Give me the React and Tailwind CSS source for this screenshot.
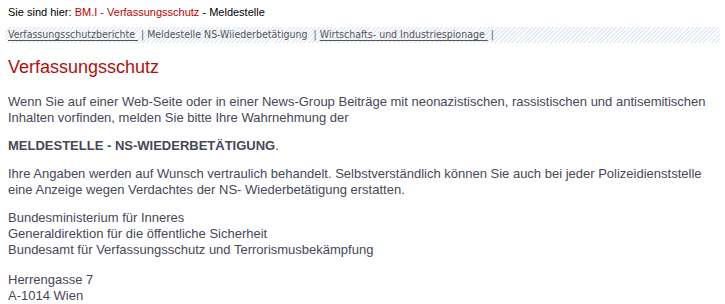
import React from 'react';

const NavLink = ({ children }) => (
  <a href="#" className="text-[#555] underline underline-offset-2 hover:text-[#b00]">
    {children}
  </a>
);

const App = () => {
  return (
    <div className="w-[725px] h-[304px] overflow-hidden bg-white font-['Liberation_Sans',Arial,sans-serif]">
      {/* Breadcrumb */}
      <div className="pl-2 pt-[5px] h-[27px] text-[11px] leading-[14px] text-black">
        Sie sind hier: <span className="text-[#c00000]">BM.I - Verfassungsschutz</span> - Meldestelle
      </div>

      {/* Subnavigation */}
      <div className="ml-[5px] mr-[5px] h-[16px] pl-[3px] flex items-center text-[10.5px] text-[#555] font-['DejaVu_Sans_Condensed','DejaVu_Sans',sans-serif] bg-[repeating-linear-gradient(135deg,#e2eaf5_0px,#e2eaf5_1.4px,#ffffff_1.4px,#ffffff_3px)]">
        <NavLink>Verfassungsschutzberichte&nbsp;</NavLink>
        <span className="mx-[3px]">|</span>
        <span>Meldestelle NS-Wiiederbetätigung&nbsp;</span>
        <span className="mx-[3px]">|</span>
        <NavLink>Wirtschafts- und Industriespionage&nbsp;</NavLink>
        <span className="mx-[3px]">|</span>
      </div>

      {/* Content */}
      <div className="px-2 pt-[13px] text-[13px] leading-[16px] text-[#474757]">
        <h1 className="text-[18px] leading-[22px] text-[#b20f0f] mb-[16px]">Verfassungsschutz</h1>
        <p className="mb-[12px]">
          Wenn Sie auf einer Web-Seite oder in einer News-Group Beiträge mit neonazistischen, rassistischen und antisemitischen Inhalten vorfinden, melden Sie bitte Ihre Wahrnehmung der
        </p>
        <p className="mb-[12px]">
          <strong>MELDESTELLE - NS-WIEDERBETÄTIGUNG</strong>.
        </p>
        <p className="mb-[12px]">
          Ihre Angaben werden auf Wunsch vertraulich behandelt. Selbstverständlich können Sie auch bei jeder Polizeidienststelle eine Anzeige wegen Verdachtes der NS- Wiederbetätigung erstatten.
        </p>
        <p className="mb-[14px]">
          Bundesministerium für Inneres<br />
          Generaldirektion für die öffentliche Sicherheit<br />
          Bundesamt für Verfassungsschutz und Terrorismusbekämpfung
        </p>
        <p>
          Herrengasse 7<br />
          A-1014 Wien
        </p>
      </div>
    </div>
  );
};

export default App;
